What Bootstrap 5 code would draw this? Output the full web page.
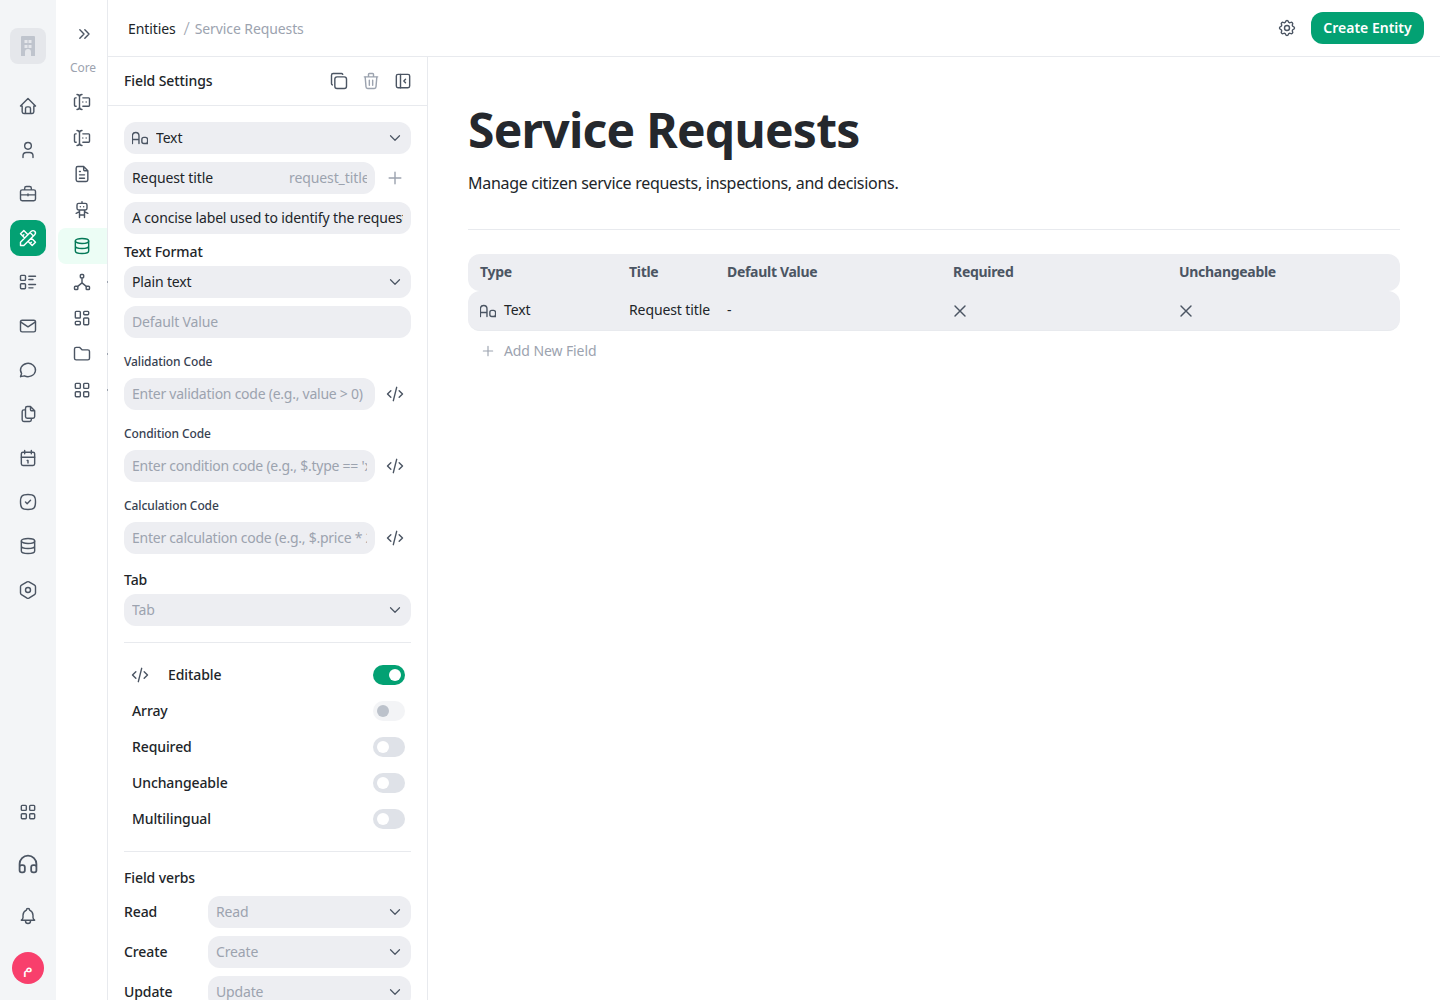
<!DOCTYPE html>
<html lang="en">

<head>
  <meta charset="utf-8">
  <meta name="viewport" content="width=device-width">
  <title>Service Requests</title>
  <link href="https://cdn.jsdelivr.net/npm/bootstrap@5.3.2/dist/css/bootstrap.min.css" rel="stylesheet">
  <style>
    body { font-family: "Noto Sans", "DejaVu Sans", sans-serif; font-size: 14px; color: #212529; letter-spacing: -.1px; }
    .ico { width: 20px; height: 20px; fill: none; stroke: currentColor; stroke-width: 1.7; stroke-linecap: round; stroke-linejoin: round; flex: none; }
    .ico-sm { width: 16px; height: 16px; }
    .ico-muted { color: #9ca3af; }
    .ico-mid { color: #4b5563; }
    .txt-lift { padding-bottom: 2px; }

    .rail-main { width: 56px; background: #f3f5f7; padding: 28px 0 14px; color: #4b5563; }
    .rail-logo { width: 36px; height: 36px; border-radius: 8px; background: #e5e7eb; margin-bottom: 24px; }
    .rail-logo svg { width: 24px; height: 24px; fill: #bfc4cd; }
    .rail-btn { width: 36px; height: 36px; border-radius: 10px; }
    .rail-btn-on { background: #03a173; color: #fff; }
    .rail-avatar { width: 32px; height: 32px; border-radius: 50%; background: #f83f6c; color: #fff; font-family: "DejaVu Sans", sans-serif; font-size: 16px; margin: 2px; }

    .rail-sub { width: 52px; border-right: 1px solid #e8eaee; color: #4b5563; padding-top: 24px; }
    .rail-sub-top { height: 20px; padding-left: 18px; margin-bottom: 15px; }
    .rail-sub-title { font-size: 12px; color: #9ca3af; height: 18px; line-height: 18px; padding-left: 14px; margin-bottom: 7px; }
    .rail-sub-item { width: 49px; height: 36px; margin-left: 2px; padding-right: 1px; border-radius: 8px 0 0 8px; }
    .rail-sub-on { background: #ecfdf5; color: #047857; }
    .rail-speck { right: -1px; top: 17px; width: 1px; height: 2px; background: #9ca3af; }

    .top-bar { height: 57px; border-bottom: 1px solid #e8eaee; padding: 0 16px 0 20px; }
    .crumb-sep { color: #9ca3af; margin: 0 5px 0 8px; font-size: 18px; font-weight: 300; line-height: 1; }
    .gear-gap { margin-right: 14px; }
    .btn-create { background: #03a173; color: #fff; font-weight: 600; height: 32px; min-width: 113px; padding: 0 12px 2px; border-radius: 12px; border: 0; font-size: 14px; }
    .btn-create:hover { background: #03a173; color: #fff; }

    .side-panel { width: 320px; border-right: 1px solid #e8eaee; }
    .side-head { height: 49px; border-bottom: 1px solid #e8eaee; padding: 0 16px; font-weight: 500; }
    .side-actions { gap: 12px; margin-right: -2px; }
    .side-body { padding: 16px; }
    .field-pill, .form-control.field-pill, .form-select.field-pill {
      height: 32px; background-color: #edeef2; border: 0; border-radius: 12px; font-size: 14px; padding: 0 8px 2px; color: #212529; box-shadow: none; letter-spacing: -.15px;
    }
    .form-control.code-input { letter-spacing: -.25px; }
    .form-select.field-pill {
      padding-right: 32px; background-position: right 7px center; background-size: 18px 18px;
      background-image: url("data:image/svg+xml,%3csvg xmlns='http://www.w3.org/2000/svg' viewBox='0 0 24 24' fill='none' stroke='%234b5563' stroke-width='1.6' stroke-linecap='round' stroke-linejoin='round'%3e%3cpath d='M6 9l6 6 6-6'/%3e%3c/svg%3e");
    }
    .form-select.field-empty { color: #9ca3af; }
    .form-select.field-icon { padding-left: 32px; }
    .field-icon-glyph { left: 8px; top: 8px; color: #4b5563; }
    .field-pill::placeholder { color: #9ca3af; opacity: 1; }
    .pill-wrap { height: 32px; background: #edeef2; border-radius: 12px; padding: 0 8px; min-width: 0; }
    .pill-input { border: 0; background: transparent; outline: 0; padding: 0 0 2px; width: 100%; min-width: 0; font-size: 14px; color: #212529; letter-spacing: -.1px; }
    .pill-key { width: 78px; flex: none; color: #9ca3af; }
    .pill-side { width: 36px; flex: none; padding-right: 6px; }
    .label-main { font-weight: 500; line-height: 20px; margin-bottom: 4px; }
    .label-code { font-size: 12px; font-weight: 500; color: #374151; line-height: 16px; margin: 16px 0 8px; }
    .side-rule { border-top: 1px solid #e8eaee; opacity: 1; margin: 16px 0 14px; }
    .side-rule-b { margin: 14px 0 16px; }
    .toggle-row { height: 36px; padding: 0 6px 0 8px; font-weight: 500; }
    .toggle-row span { padding-bottom: 2px; }
    .toggle-code { width: 38px; margin-left: -2px; }
    .form-switch .toggle-sw {
      width: 32px; height: 20px; margin: 0; border: 0; float: none; background-color: #dfe2e8; box-shadow: none; opacity: 1;
      background-size: 20px 20px; background-position: left center;
      background-image: url("data:image/svg+xml,%3csvg xmlns='http://www.w3.org/2000/svg' viewBox='0 0 20 20'%3e%3ccircle cx='10' cy='10' r='6' fill='%23fff'/%3e%3c/svg%3e");
    }
    .form-switch .toggle-sw:checked { background-color: #03a173; background-position: right center; }
    .form-switch .toggle-sw:disabled {
      background-color: #f3f4f6; opacity: 1;
      background-image: url("data:image/svg+xml,%3csvg xmlns='http://www.w3.org/2000/svg' viewBox='0 0 20 20'%3e%3ccircle cx='10' cy='10' r='6' fill='%23bcc2cb'/%3e%3c/svg%3e");
    }
    .verb-label { width: 84px; flex: none; font-weight: 500; padding-bottom: 2px; }

    .main-pane { padding: 40px; }
    .page-title { font-size: 48px; font-weight: 700; line-height: 66px; margin: 0 0 8px; color: #25282d; letter-spacing: -.75px; }
    .page-sub { font-size: 16px; line-height: 24px; margin: 0; letter-spacing: -.3px; }
    .page-rule { border-top: 1px solid #e8eaee; opacity: 1; margin: 34px 0 24px; }
    .field-table { table-layout: fixed; width: 100%; border-collapse: separate; border-spacing: 0; }
    .field-table th { height: 37px; background: #edeef2; color: #4b5563; font-weight: 700; padding: 0 12px 2px; letter-spacing: -.3px; }
    .field-table td { height: 40px; background: #edeef2; border-bottom: 1px solid #e8eaee; padding: 0 12px; }
    .field-table th:first-child { border-radius: 12px 0 0 12px; }
    .field-table th:last-child { border-radius: 0 12px 12px 0; }
    .field-table td:first-child { border-radius: 12px 0 0 12px; }
    .field-table td:last-child { border-radius: 0 12px 12px 0; }
    .col-type { width: 149px; }
    .col-title { width: 98px; }
    .col-wide { width: 226px; }
    .cell-x { margin-left: -3px; }
    .add-field { height: 40px; padding-left: 12px; color: #9ca3af; gap: 8px; }
  </style>
</head>

<body>
  <svg width="0" height="0" class="position-absolute">
    <symbol id="i-home" viewBox="0 0 24 24"><path d="M5 12H3l9-9 9 9h-2M5 12v7a2 2 0 0 0 2 2h10a2 2 0 0 0 2-2v-7M9 21v-6a2 2 0 0 1 2-2h2a2 2 0 0 1 2 2v6"/></symbol>
    <symbol id="i-user" viewBox="0 0 24 24"><circle cx="12" cy="7" r="4"/><path d="M6 21v-2a4 4 0 0 1 4-4h4a4 4 0 0 1 4 4v2"/></symbol>
    <symbol id="i-case" viewBox="0 0 24 24"><path d="M3 9a2 2 0 0 1 2-2h14a2 2 0 0 1 2 2v9a2 2 0 0 1-2 2H5a2 2 0 0 1-2-2zM8 7V5a2 2 0 0 1 2-2h4a2 2 0 0 1 2 2v2M3 13h18M12 12v2"/></symbol>
    <symbol id="i-tools" viewBox="0 0 24 24"><path d="M3 21h4L20 8a1.5 1.5 0 0 0-4-4L3 17v4M14.5 5.5l4 4M12 8 7 3 3 7l5 5M7 8 5.5 9.5M16 12l5 5-4 4-5-5M16 17l-1.5 1.5"/></symbol>
    <symbol id="i-list" viewBox="0 0 24 24"><path d="M13 5h8M13 9h5M13 15h8M13 19h5M4 4h4a1 1 0 0 1 1 1v4a1 1 0 0 1-1 1H4a1 1 0 0 1-1-1V5a1 1 0 0 1 1-1zM4 14h4a1 1 0 0 1 1 1v4a1 1 0 0 1-1 1H4a1 1 0 0 1-1-1v-4a1 1 0 0 1 1-1z"/></symbol>
    <symbol id="i-mail" viewBox="0 0 24 24"><rect x="3" y="5" width="18" height="14" rx="2"/><path d="m3 7 9 6 9-6"/></symbol>
    <symbol id="i-chat" viewBox="0 0 24 24"><path d="m3 20 1.3-3.9A9 8 0 1 1 7.7 19L3 20"/></symbol>
    <symbol id="i-files" viewBox="0 0 24 24"><path d="M15 3v4a1 1 0 0 0 1 1h4M18 17h-7a2 2 0 0 1-2-2V5a2 2 0 0 1 2-2h4l5 5v7a2 2 0 0 1-2 2zM16 17v2a2 2 0 0 1-2 2H7a2 2 0 0 1-2-2V9a2 2 0 0 1 2-2h2"/></symbol>
    <symbol id="i-cal" viewBox="0 0 24 24"><rect x="4" y="5" width="16" height="16" rx="2"/><path d="M16 3v4M8 3v4M4 11h16M11 15h1v3"/></symbol>
    <symbol id="i-check" viewBox="0 0 24 24"><path d="M12 3c7.2 0 9 1.8 9 9s-1.8 9-9 9-9-1.8-9-9 1.8-9 9-9zM9 12l2 2 4-4"/></symbol>
    <symbol id="i-db" viewBox="0 0 24 24"><ellipse cx="12" cy="6" rx="8" ry="3"/><path d="M4 6v6a8 3 0 0 0 16 0V6M4 12v6a8 3 0 0 0 16 0v-6"/></symbol>
    <symbol id="i-hex" viewBox="0 0 24 24"><path d="M19.875 6.27A2.225 2.225 0 0 1 21 8.218v7.284c0 .809-.443 1.555-1.158 1.948l-6.75 4.27a2.269 2.269 0 0 1-2.184 0l-6.75-4.27A2.225 2.225 0 0 1 3 15.502V8.217c0-.809.443-1.554 1.158-1.947l6.75-3.98a2.33 2.33 0 0 1 2.25 0l6.75 3.98z"/><circle cx="12" cy="12" r="3"/></symbol>
    <symbol id="i-grid" viewBox="0 0 24 24"><rect x="4" y="4" width="6" height="6" rx="1"/><rect x="14" y="4" width="6" height="6" rx="1"/><rect x="4" y="14" width="6" height="6" rx="1"/><rect x="14" y="14" width="6" height="6" rx="1"/></symbol>
    <symbol id="i-phones" viewBox="2.500 2.500 19 19"><path d="M4 15a2 2 0 0 1 2-2h1a2 2 0 0 1 2 2v3a2 2 0 0 1-2 2H6a2 2 0 0 1-2-2zM15 15a2 2 0 0 1 2-2h1a2 2 0 0 1 2 2v3a2 2 0 0 1-2 2h-1a2 2 0 0 1-2-2zM4 15v-3a8 8 0 0 1 16 0v3"/></symbol>
    <symbol id="i-bell" viewBox="0 0 24 24"><path d="M10 5a2 2 0 1 1 4 0 7 7 0 0 1 4 6v3a4 4 0 0 0 2 3H4a4 4 0 0 0 2-3v-3a7 7 0 0 1 4-6M9 17v1a3 3 0 0 0 6 0v-1"/></symbol>
    <symbol id="i-chevrons" viewBox="0 0 24 24"><path d="m7 7 5 5-5 5M13 7l5 5-5 5"/></symbol>
    <symbol id="i-forms" viewBox="0 0 24 24"><path d="M12 3a3 3 0 0 0-3 3v12a3 3 0 0 0 3 3M6 3a3 3 0 0 1 3 3v12a3 3 0 0 1-3 3M13 7h7a1 1 0 0 1 1 1v8a1 1 0 0 1-1 1h-7M5 7H4a1 1 0 0 0-1 1v8a1 1 0 0 0 1 1h1M17 12h.01M13 12h.01"/></symbol>
    <symbol id="i-doc" viewBox="0 0 24 24"><path d="M14 3v4a1 1 0 0 0 1 1h4M17 21H7a2 2 0 0 1-2-2V5a2 2 0 0 1 2-2h7l5 5v11a2 2 0 0 1-2 2zM9 9h1M9 13h6M9 17h6"/></symbol>
    <symbol id="i-robot" viewBox="0 0 24 24"><path d="M8 4h8a2 2 0 0 1 2 2v4a2 2 0 0 1-2 2H8a2 2 0 0 1-2-2V6a2 2 0 0 1 2-2zM12 2v2M9 12v9M15 12v9M5 16l4-2M15 14l4 2M9 18h6M10 8v.01M14 8v.01"/></symbol>
    <symbol id="i-tree" viewBox="0 0 24 24"><rect x="10" y="3" width="4" height="4" rx="1"/><rect x="3" y="17" width="4" height="4" rx="1"/><rect x="17" y="17" width="4" height="4" rx="1"/><path d="M6.5 17.5 12 13l5.500 4.500M12 7v6"/></symbol>
    <symbol id="i-dash" viewBox="0 0 24 24"><path d="M5 4h4a1 1 0 0 1 1 1v6a1 1 0 0 1-1 1H5a1 1 0 0 1-1-1V5a1 1 0 0 1 1-1zM5 16h4a1 1 0 0 1 1 1v2a1 1 0 0 1-1 1H5a1 1 0 0 1-1-1v-2a1 1 0 0 1 1-1zM15 12h4a1 1 0 0 1 1 1v6a1 1 0 0 1-1 1h-4a1 1 0 0 1-1-1v-6a1 1 0 0 1 1-1zM15 4h4a1 1 0 0 1 1 1v2a1 1 0 0 1-1 1h-4a1 1 0 0 1-1-1V5a1 1 0 0 1 1-1z"/></symbol>
    <symbol id="i-folder" viewBox="0 0 24 24"><path d="M5 4h4l3 3h7a2 2 0 0 1 2 2v8a2 2 0 0 1-2 2H5a2 2 0 0 1-2-2V6a2 2 0 0 1 2-2"/></symbol>
    <symbol id="i-copy" viewBox="0 0 24 24"><path d="M7 9.667A2.667 2.667 0 0 1 9.667 7h8.666A2.667 2.667 0 0 1 21 9.667v8.666A2.667 2.667 0 0 1 18.333 21H9.667A2.667 2.667 0 0 1 7 18.333zM4.012 16.737A2.005 2.005 0 0 1 3 15V5c0-1.100.9-2 2-2h10c.75 0 1.158.385 1.500 1"/></symbol>
    <symbol id="i-trash" viewBox="0 0 24 24"><path d="M4 7h16M10 11v6M14 11v6M5 7l1 12a2 2 0 0 0 2 2h8a2 2 0 0 0 2-2l1-12M9 7V4a1 1 0 0 1 1-1h4a1 1 0 0 1 1 1v3"/></symbol>
    <symbol id="i-panel" viewBox="0 0 24 24"><rect x="4" y="4" width="16" height="16" rx="2"/><path d="M9 4v16M15 10l-2 2 2 2"/></symbol>
    <symbol id="i-case-aa" viewBox="2.500 2.500 19.500 19.500"><path d="M3 19V9.500a4 4 0 0 1 8 0V19M3 14h8M17 11.500h2a2.500 2.500 0 0 1 2.500 2.500v2.500a2.500 2.500 0 0 1-2.500 2.500h-2a2.500 2.500 0 0 1-2.500-2.500V14a2.500 2.500 0 0 1 2.500-2.500zM21.500 14v5"/></symbol>
    <symbol id="i-plus" viewBox="0 0 24 24"><path d="M12 5v14M5 12h14"/></symbol>
    <symbol id="i-code" viewBox="0 0 24 24"><path d="m7 8-4 4 4 4M17 8l4 4-4 4M14 4l-4 16"/></symbol>
    <symbol id="i-x" viewBox="0 0 24 24"><path d="M18 6 6 18M6 6l12 12"/></symbol>
    <symbol id="i-gear" viewBox="0 0 24 24"><path d="M10.325 4.317c.426-1.756 2.924-1.756 3.35 0a1.724 1.724 0 0 0 2.573 1.066c1.543-.94 3.31.826 2.37 2.37a1.724 1.724 0 0 0 1.065 2.572c1.756.426 1.756 2.924 0 3.35a1.724 1.724 0 0 0-1.066 2.573c.94 1.543-.826 3.31-2.37 2.37a1.724 1.724 0 0 0-2.572 1.065c-.426 1.756-2.924 1.756-3.35 0a1.724 1.724 0 0 0-2.573-1.066c-1.543.94-3.31-.826-2.37-2.37a1.724 1.724 0 0 0-1.065-2.572c-1.756-.426-1.756-2.924 0-3.35a1.724 1.724 0 0 0 1.066-2.573c-.94-1.543.826-3.31 2.37-2.37c1 .608 2.296.07 2.572-1.065z"/><circle cx="12" cy="12" r="3"/></symbol>
  </svg>

  <div class="d-flex vh-100 overflow-hidden">
    <nav class="rail-main d-flex flex-column align-items-center flex-shrink-0">
      <div class="rail-logo d-flex align-items-center justify-content-center">
        <svg viewBox="0 0 24 24"><path fill-rule="evenodd" d="M6 2h12a1 1 0 0 1 1 1v19h-4v-4a3 3 0 0 0-6 0v4H5V3a1 1 0 0 1 1-1zM8.500 6v3h3V6zM12.500 6v3h3V6zM8.500 11v3h3v-3zM12.500 11v3h3v-3z"/></svg>
      </div>
      <div class="d-flex flex-column gap-2">
        <div class="rail-btn d-flex align-items-center justify-content-center"><svg class="ico"><use href="#i-home"/></svg></div>
        <div class="rail-btn d-flex align-items-center justify-content-center"><svg class="ico"><use href="#i-user"/></svg></div>
        <div class="rail-btn d-flex align-items-center justify-content-center"><svg class="ico"><use href="#i-case"/></svg></div>
        <div class="rail-btn rail-btn-on d-flex align-items-center justify-content-center"><svg class="ico"><use href="#i-tools"/></svg></div>
        <div class="rail-btn d-flex align-items-center justify-content-center"><svg class="ico"><use href="#i-list"/></svg></div>
        <div class="rail-btn d-flex align-items-center justify-content-center"><svg class="ico"><use href="#i-mail"/></svg></div>
        <div class="rail-btn d-flex align-items-center justify-content-center"><svg class="ico"><use href="#i-chat"/></svg></div>
        <div class="rail-btn d-flex align-items-center justify-content-center"><svg class="ico"><use href="#i-files"/></svg></div>
        <div class="rail-btn d-flex align-items-center justify-content-center"><svg class="ico"><use href="#i-cal"/></svg></div>
        <div class="rail-btn d-flex align-items-center justify-content-center"><svg class="ico"><use href="#i-check"/></svg></div>
        <div class="rail-btn d-flex align-items-center justify-content-center"><svg class="ico"><use href="#i-db"/></svg></div>
        <div class="rail-btn d-flex align-items-center justify-content-center"><svg class="ico"><use href="#i-hex"/></svg></div>
      </div>
      <div class="mt-auto d-flex flex-column gap-3">
        <div class="rail-btn d-flex align-items-center justify-content-center"><svg class="ico"><use href="#i-grid"/></svg></div>
        <div class="rail-btn d-flex align-items-center justify-content-center"><svg class="ico"><use href="#i-phones"/></svg></div>
        <div class="rail-btn d-flex align-items-center justify-content-center"><svg class="ico"><use href="#i-bell"/></svg></div>
        <div class="rail-avatar d-flex align-items-center justify-content-center">م</div>
      </div>
    </nav>

    <nav class="rail-sub flex-shrink-0">
      <div class="rail-sub-top"><svg class="ico d-block"><use href="#i-chevrons"/></svg></div>
      <div class="rail-sub-title">Core</div>
      <div class="rail-sub-item d-flex align-items-center justify-content-center"><svg class="ico"><use href="#i-forms"/></svg></div>
      <div class="rail-sub-item d-flex align-items-center justify-content-center"><svg class="ico"><use href="#i-forms"/></svg></div>
      <div class="rail-sub-item d-flex align-items-center justify-content-center"><svg class="ico"><use href="#i-doc"/></svg></div>
      <div class="rail-sub-item d-flex align-items-center justify-content-center"><svg class="ico"><use href="#i-robot"/></svg></div>
      <div class="rail-sub-item rail-sub-on d-flex align-items-center justify-content-center"><svg class="ico"><use href="#i-db"/></svg></div>
      <div class="rail-sub-item position-relative d-flex align-items-center justify-content-center"><svg class="ico"><use href="#i-tree"/></svg><span class="rail-speck position-absolute"></span></div>
      <div class="rail-sub-item d-flex align-items-center justify-content-center"><svg class="ico"><use href="#i-dash"/></svg></div>
      <div class="rail-sub-item position-relative d-flex align-items-center justify-content-center"><svg class="ico"><use href="#i-folder"/></svg><span class="rail-speck position-absolute"></span></div>
      <div class="rail-sub-item position-relative d-flex align-items-center justify-content-center"><svg class="ico"><use href="#i-grid"/></svg><span class="rail-speck position-absolute"></span></div>
    </nav>

    <div class="flex-grow-1 d-flex flex-column overflow-hidden">
      <header class="top-bar d-flex align-items-center justify-content-between flex-shrink-0">
        <div class="d-flex align-items-center">
          <span>Entities</span>
          <span class="crumb-sep">/</span>
          <span class="ico-muted">Service Requests</span>
        </div>
        <div class="d-flex align-items-center">
          <svg class="ico ico-mid gear-gap"><use href="#i-gear"/></svg>
          <button class="btn btn-create" type="button">Create Entity</button>
        </div>
      </header>

      <div class="d-flex flex-grow-1 overflow-hidden">
        <aside class="side-panel flex-shrink-0 overflow-hidden">
          <div class="side-head d-flex align-items-center justify-content-between">
            <span class="txt-lift">Field Settings</span>
            <div class="side-actions d-flex">
              <svg class="ico ico-mid"><use href="#i-copy"/></svg>
              <svg class="ico ico-muted"><use href="#i-trash"/></svg>
              <svg class="ico ico-mid"><use href="#i-panel"/></svg>
            </div>
          </div>

          <div class="side-body">
            <div class="position-relative mb-2">
              <svg class="ico ico-sm field-icon-glyph position-absolute"><use href="#i-case-aa"/></svg>
              <select class="form-select field-pill field-icon"><option>Text</option></select>
            </div>
            <div class="d-flex mb-2">
              <div class="pill-wrap d-flex align-items-center flex-grow-1 gap-2">
                <input class="pill-input flex-grow-1" type="text" value="Request title">
                <input class="pill-input pill-key" type="text" value="request_title">
              </div>
              <div class="pill-side d-flex align-items-center justify-content-end ico-muted"><svg class="ico"><use href="#i-plus"/></svg></div>
            </div>
            <input class="form-control field-pill mb-2" type="text" value="A concise label used to identify the request in lists">

            <div class="label-main">Text Format</div>
            <select class="form-select field-pill mb-2"><option>Plain text</option></select>
            <input class="form-control field-pill" type="text" placeholder="Default Value">

            <div class="label-code">Validation Code</div>
            <div class="d-flex">
              <input class="form-control field-pill code-input" type="text" placeholder="Enter validation code (e.g., value > 0)">
              <div class="pill-side d-flex align-items-center justify-content-end ico-mid"><svg class="ico"><use href="#i-code"/></svg></div>
            </div>
            <div class="label-code">Condition Code</div>
            <div class="d-flex">
              <input class="form-control field-pill code-input" type="text" placeholder="Enter condition code (e.g., $.type == 'x')">
              <div class="pill-side d-flex align-items-center justify-content-end ico-mid"><svg class="ico"><use href="#i-code"/></svg></div>
            </div>
            <div class="label-code">Calculation Code</div>
            <div class="d-flex">
              <input class="form-control field-pill code-input" type="text" placeholder="Enter calculation code (e.g., $.price * 2)">
              <div class="pill-side d-flex align-items-center justify-content-end ico-mid"><svg class="ico"><use href="#i-code"/></svg></div>
            </div>

            <div class="label-main mt-3">Tab</div>
            <select class="form-select field-pill field-empty"><option>Tab</option></select>

            <hr class="side-rule">

            <div class="toggle-row d-flex align-items-center form-switch">
              <div class="toggle-code ico-mid d-flex"><svg class="ico"><use href="#i-code"/></svg></div>
              <span class="flex-grow-1">Editable</span>
              <input class="form-check-input toggle-sw" type="checkbox" checked>
            </div>
            <div class="toggle-row d-flex align-items-center form-switch">
              <span class="flex-grow-1">Array</span>
              <input class="form-check-input toggle-sw" type="checkbox" disabled>
            </div>
            <div class="toggle-row d-flex align-items-center form-switch">
              <span class="flex-grow-1">Required</span>
              <input class="form-check-input toggle-sw" type="checkbox">
            </div>
            <div class="toggle-row d-flex align-items-center form-switch">
              <span class="flex-grow-1">Unchangeable</span>
              <input class="form-check-input toggle-sw" type="checkbox">
            </div>
            <div class="toggle-row d-flex align-items-center form-switch">
              <span class="flex-grow-1">Multilingual</span>
              <input class="form-check-input toggle-sw" type="checkbox">
            </div>

            <hr class="side-rule side-rule-b">

            <div class="label-main mb-2">Field verbs</div>
            <div class="d-flex align-items-center mb-2">
              <span class="verb-label">Read</span>
              <select class="form-select field-pill field-empty"><option>Read</option></select>
            </div>
            <div class="d-flex align-items-center mb-2">
              <span class="verb-label">Create</span>
              <select class="form-select field-pill field-empty"><option>Create</option></select>
            </div>
            <div class="d-flex align-items-center">
              <span class="verb-label">Update</span>
              <select class="form-select field-pill field-empty"><option>Update</option></select>
            </div>
          </div>
        </aside>

        <main class="main-pane flex-grow-1 overflow-hidden">
          <h1 class="page-title">Service Requests</h1>
          <p class="page-sub">Manage citizen service requests, inspections, and decisions.</p>
          <hr class="page-rule">
          <table class="field-table">
            <colgroup>
              <col class="col-type"><col class="col-title"><col class="col-wide"><col class="col-wide"><col>
            </colgroup>
            <thead>
              <tr><th>Type</th><th>Title</th><th>Default Value</th><th>Required</th><th>Unchangeable</th></tr>
            </thead>
            <tbody>
              <tr>
                <td><span class="d-flex align-items-center gap-2"><svg class="ico ico-sm ico-mid"><use href="#i-case-aa"/></svg><span class="txt-lift">Text</span></span></td>
                <td class="text-nowrap"><span class="txt-lift d-block">Request title</span></td>
                <td><span class="txt-lift d-block">-</span></td>
                <td><svg class="ico ico-mid d-block cell-x"><use href="#i-x"/></svg></td>
                <td><svg class="ico ico-mid d-block cell-x"><use href="#i-x"/></svg></td>
              </tr>
            </tbody>
          </table>
          <div class="add-field d-flex align-items-center"><svg class="ico ico-sm"><use href="#i-plus"/></svg><span class="txt-lift">Add New Field</span></div>
        </main>
      </div>
    </div>
  </div>

  <script src="https://cdn.jsdelivr.net/npm/bootstrap@5.3.2/dist/js/bootstrap.bundle.min.js"></script>
</body>

</html>
